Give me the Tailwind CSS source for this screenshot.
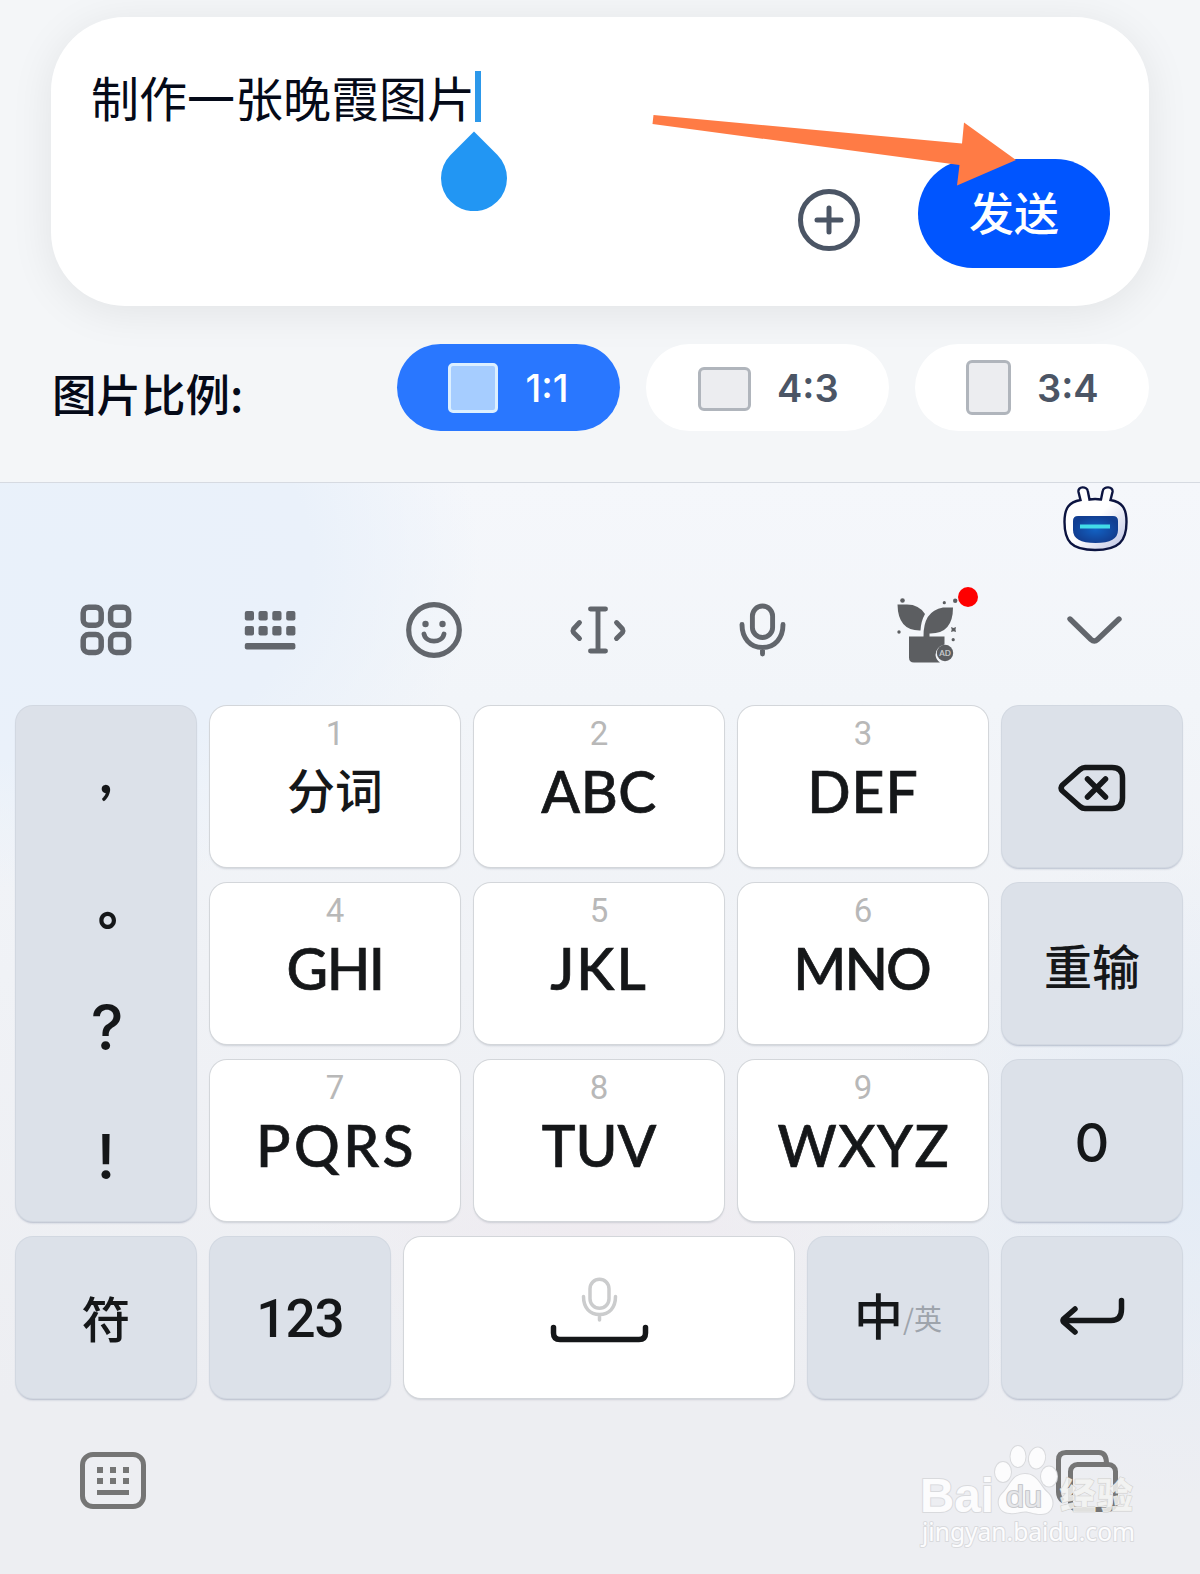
<!DOCTYPE html>
<html lang="zh-CN">
<head>
  <meta charset="utf-8"/>
  <meta content="width=device-width, initial-scale=1" name="viewport"/>
  <title>图片生成</title>
  <script src="https://cdn.jsdelivr.net/npm/@tailwindcss/browser@4"></script>
  <style>
    body { font-family: 'Lato', 'Noto Sans CJK SC', sans-serif; }
    .cjk { font-family: 'Noto Sans CJK SC', sans-serif; }
    .keyboard {
      background:
        radial-gradient(ellipse 420px 330px at 60px 80px, #e9f1fa 0%, #eaf1fa 60%, rgba(234,241,250,0) 100%),
        radial-gradient(ellipse 330px 330px at 1200px 690px, #e4ecf6 0%, rgba(228,236,246,0) 100%),
        radial-gradient(ellipse 300px 120px at 600px 750px, #efebf0 0%, rgba(239,235,240,0) 100%),
        linear-gradient(#f5f7fb 0%, #f2f5f9 20%, #f0f2f6 45%, #edeef2 84%, #edeef2 100%);
    }
    .key { border-radius: 17px; background: #fff; box-shadow: 0 0 0 1px #d3d6da, 0 2px 2px rgba(90,100,120,.22); }
    .fn { background: #dce1e9; box-shadow: 0 0 0 1px #d2d8e1, 0 2px 2px rgba(80,95,130,.36); }
    .abc { -webkit-text-stroke: .7px #151719; }
  </style>
</head>
<body class="w-[1200px] h-[1574px] overflow-hidden bg-[#f4f6f8] relative">
  <!-- prompt area -->
  <section class="h-[482px] pt-[17px] px-[51px]">
    <div class="h-[289px] rounded-[74px] bg-white shadow-[0_6px_44px_rgba(0,0,0,0.08)] pl-[40px] pr-[39px] pt-[54px] pb-[38px] flex flex-col justify-between">
      <div class="flex items-center h-[51px]">
        <span class="cjk text-[48px] leading-[51px] text-[#050a18] w-[384px] whitespace-nowrap">制作一张晚霞图片</span>
        <span class="w-[6px] h-[51px] bg-[#2c98ea]"></span>
      </div>
      <div class="flex items-center justify-end gap-[58px]">
        <svg class="w-[62px] h-[62px] mt-[13px]" viewBox="0 0 62 62" fill="none" stroke="#4b5565" stroke-width="5" stroke-linecap="round">
          <circle cx="31" cy="31" r="28.5"/>
          <path d="M31 19v24M19 31h24"/>
        </svg>
        <button class="cjk w-[192px] h-[109px] rounded-full bg-[#0055ff] text-white text-[45px] font-medium leading-none pb-[4px]">发送</button>
      </div>
    </div>

    <div class="flex items-center mt-[38px] h-[87px]">
      <span class="cjk text-[44.500px] font-medium text-[#050a18] w-[345.500px] leading-none pl-[1px] pt-[12px] whitespace-nowrap">图片比例:</span>
      <div class="flex gap-[26px] font-[Inter] font-semibold text-[38px] leading-none text-[#4b5565]">
        <div class="w-[223.500px] h-[87px] rounded-full bg-[#2977ff] text-white font-medium flex items-center pl-[51.500px]">
          <span class="w-[50px] h-[50px] mt-[1px] rounded-[5px] border-[3px] border-[#dcefff] bg-[#a6cdff]"></span>
          <span class="ml-[27.500px]">1:1</span>
        </div>
        <div class="w-[243px] h-[87px] rounded-full bg-white flex items-center pl-[52px]">
          <span class="w-[53px] h-[44px] mt-[2px] rounded-[6px] border-[3px] border-[#b0b5bc] bg-[#ecedf0]"></span>
          <span class="ml-[26px]">4:3</span>
        </div>
        <div class="w-[234px] h-[87px] rounded-full bg-white flex items-center pl-[51px]">
          <span class="w-[45px] h-[55px] rounded-[6px] border-[3px] border-[#b0b5bc] bg-[#ecedf0]"></span>
          <span class="ml-[26px]">3:4</span>
        </div>
      </div>
    </div>
  </section>

  <!-- caret handle -->
  <svg class="absolute left-[441px] top-[131px] w-[66px] h-[80px]" viewBox="0 0 66 80">
    <path d="M33 .5L56.500 24A33 33 0 1 1 9.500 24Z" fill="#2296f3"/>
  </svg>
  <!-- pointer arrow -->
  <svg class="absolute left-[650px] top-[110px] w-[370px] h-[80px]" viewBox="650 110 370 80">
    <path d="M653.500 115L962 143.500 964 122.500 1016 160 957 185.500 959.500 165 652.500 124Z" fill="#ff7b45"/>
  </svg>

  <!-- keyboard -->
  <section class="keyboard h-[1092px] border-t border-[#d6dae1] text-[#151719]">
    <div class="h-[70px] flex justify-end pr-[72px] pt-[2px]">
      <svg class="w-[66px] h-[67px]" viewBox="1062 485 66 67">
        <defs>
          <linearGradient id="head" x1="0" y1="0" x2="1" y2="1"><stop offset=".5" stop-color="#fff"/><stop offset="1" stop-color="#b9c0e2"/></linearGradient>
          <radialGradient id="face"><stop offset="0" stop-color="#1262c4"/><stop offset="1" stop-color="#123f92"/></radialGradient>
        </defs>
        <path d="M1080.500 500L1078.500 492C1077.500 486 1087 486 1087.800 491L1089.500 499.500Q1095 498.500 1101 499.500L1102.700 491C1103.500 486 1113.500 486 1112.500 492L1110.500 500C1122 502 1126.500 508 1126.500 522C1126.500 541 1119 550 1095 550C1071 550 1064.500 541 1064.500 522C1064.500 508 1069 502 1080.500 500Z" fill="url(#head)" stroke="#0c1440" stroke-width="2.400"/>
        <path d="M1078 516H1113Q1118 516 1118 521V530Q1118 543 1095.500 543Q1073 543 1073 530V521Q1073 516 1078 516Z" fill="url(#face)"/>
        <path d="M1080 526.500h30" stroke="#42dce8" stroke-width="4"/>
      </svg>
    </div>

    <div class="h-[152px] relative">
      <svg class="w-[1200px] h-[152px]" viewBox="0 553 1200 152" fill="none" stroke="#62666c" stroke-width="5.200" stroke-linecap="round" stroke-linejoin="round">
        <!-- apps -->
        <g stroke-width="5.500">
          <rect x="83.200" y="607.200" width="18" height="18" rx="5.500"/><rect x="110.600" y="607.200" width="18" height="18" rx="5.500"/>
          <rect x="83.200" y="634.500" width="18" height="18" rx="5.500"/><rect x="110.600" y="634.500" width="18" height="18" rx="5.500"/>
        </g>
        <!-- keyboard switch -->
        <g fill="#62666c" stroke="none">
          <rect x="244.800" y="611" width="9.200" height="9.500" rx="2"/><rect x="258.500" y="611" width="9.200" height="9.500" rx="2"/><rect x="272.300" y="611" width="9.200" height="9.500" rx="2"/><rect x="286.200" y="611" width="9.200" height="9.500" rx="2"/>
          <rect x="244.800" y="626" width="9.200" height="9.500" rx="2"/><rect x="258.500" y="626" width="9.200" height="9.500" rx="2"/><rect x="272.300" y="626" width="9.200" height="9.500" rx="2"/><rect x="286.200" y="626" width="9.200" height="9.500" rx="2"/>
          <rect x="244.800" y="643" width="50.600" height="6.500" rx="2"/>
        </g>
        <!-- emoji -->
        <circle cx="434" cy="630" r="25.300"/>
        <circle cx="425.500" cy="624" r="3.200" fill="#62666c" stroke="none"/><circle cx="442.500" cy="624" r="3.200" fill="#62666c" stroke="none"/>
        <path d="M424 634C426 643.500 442 643.500 444 634" stroke-width="4.800"/>
        <!-- text cursor -->
        <path d="M590.500 609h15M590.500 651h15M598 609v42M579.500 622.500L573.500 629Q572.500 630.700 573.500 632.500L579.500 638.500M616.500 622.500L622.500 629Q623.500 630.700 622.500 632.500L616.500 638.500" stroke-width="4.900"/>
        <!-- mic -->
        <g stroke-width="4.900">
          <rect x="752.400" y="606" width="20.200" height="31.500" rx="10.100"/>
          <path d="M742 624.500C742 638 750 647.500 762.500 647.500S783 638 783 624.500M762.500 647.500v6.500"/>
        </g>
        <!-- plant -->
        <g fill="#5c5e61" stroke="none">
          <path d="M897.500 604.500H907Q919 604.500 925 614Q921 621 920.500 630.500Q898 631 897.500 604.500Z"/>
          <path d="M953 607.500H943Q923 611 923.500 637H929.500V633.500Q953 634 953 607.500Z"/>
          <path d="M909 636.500H944.500V644.500Q935.500 647 935.500 655Q936 660 940 662.500H914Q909 662.500 909 657.500Z"/>
          <circle cx="945" cy="653" r="8.200"/>
          <circle cx="902.500" cy="600.500" r="2.300"/><circle cx="944.300" cy="602.700" r="1.600"/><circle cx="955.200" cy="600.700" r="2.200"/><circle cx="899" cy="632" r="1.700"/><circle cx="953.200" cy="639.700" r="1.600"/>
          <path d="M951 627l2.500 1 2.500-1-.5 2.500.5 2.500-2.500-.8-2.500.8.700-2.500Z"/>
          <text x="945" y="656" text-anchor="middle" font-size="8" font-weight="700" fill="#c5c7ca">AD</text>
        </g>
        <!-- collapse -->
        <path d="M1070 619L1091 639.500Q1094.300 642.500 1097.500 639.500L1119 619" stroke-width="5.400"/>
      </svg>
      <span class="absolute left-[958px] top-[34px] w-[20px] h-[20px] rounded-full bg-[#fe0000]"></span>
    </div>

    <div class="mt-px ml-[16px] w-[1166px] grid grid-cols-[180px_250px_250px_250px_180px] auto-rows-[161px] gap-x-[14px] gap-y-[16px] text-[57px] leading-none font-medium text-center">
      <div class="key fn row-span-3 grid grid-rows-4 items-center font-[Inter]">
        <span class="font-[Lato] font-bold text-[57px] pt-[2px]">,</span>
        <span class="cjk pl-[34px] text-[50px] pt-[5px] font-black">。</span>
        <span class="text-[62px] pl-[2px]">?</span>
        <span class="text-[62px]">!</span>
      </div>
      <div class="key pt-[11px]"><p class="font-[Roboto] text-[33px] font-normal text-[#b8b8b8] mb-[14px]">1</p><p class="cjk text-[48px]">分词</p></div>
      <div class="key pt-[11px]"><p class="font-[Roboto] text-[33px] font-normal text-[#b8b8b8] mb-[13px]">2</p><p class="abc tracking-[.5px]">ABC</p></div>
      <div class="key pt-[11px]"><p class="font-[Roboto] text-[33px] font-normal text-[#b8b8b8] mb-[13px]">3</p><p class="abc tracking-[1px]">DEF</p></div>
      <div class="key fn flex items-center justify-center">
        <svg class="w-[68px] h-[48px] mt-[3px]" viewBox="0 0 68 48" fill="none" stroke="#151719" stroke-width="5.500" stroke-linecap="round" stroke-linejoin="round">
          <path d="M27 3.500H54Q64.500 3.500 64.500 14V34Q64.500 44.500 54 44.500H27Q24.500 44.500 22 42.500L4.500 27Q1.500 24 4.500 21L22 5.500Q24.500 3.500 27 3.500Z"/>
          <path d="M29.500 15L47.500 33M47.500 15L29.500 33"/>
        </svg>
      </div>

      <div class="key pt-[11px]"><p class="font-[Roboto] text-[33px] font-normal text-[#b8b8b8] mb-[13px]">4</p><p class="abc tracking-[-1.500px]">GHI</p></div>
      <div class="key pt-[11px]"><p class="font-[Roboto] text-[33px] font-normal text-[#b8b8b8] mb-[13px]">5</p><p class="abc tracking-[2px]">JKL</p></div>
      <div class="key pt-[11px]"><p class="font-[Roboto] text-[33px] font-normal text-[#b8b8b8] mb-[13px]">6</p><p class="abc tracking-[-2px] pr-[3px]">MNO</p></div>
      <div class="key fn flex items-center justify-center"><span class="cjk text-[48px]">重输</span></div>

      <div class="key pt-[11px]"><p class="font-[Roboto] text-[33px] font-normal text-[#b8b8b8] mb-[13px]">7</p><p class="abc tracking-[3.500px] pl-[3px]">PQRS</p></div>
      <div class="key pt-[11px]"><p class="font-[Roboto] text-[33px] font-normal text-[#b8b8b8] mb-[13px]">8</p><p class="abc">TUV</p></div>
      <div class="key pt-[11px]"><p class="font-[Roboto] text-[33px] font-normal text-[#b8b8b8] mb-[13px]">9</p><p class="abc tracking-[1.500px] pl-[2px]">WXYZ</p></div>
      <div class="key fn flex items-center justify-center"><span class="font-[Inter] text-[54px] pt-[5px]">0</span></div>
    </div>

    <div class="ml-[16px] w-[1166px] mt-[16px] h-[161px] flex gap-[14px] text-[53px] leading-none font-medium">
      <div class="key fn w-[180px] flex items-center justify-center"><span class="cjk text-[49px] pb-[3px]">符</span></div>
      <div class="key fn w-[180px] flex items-center justify-center font-[Roboto] tracking-[-1px] pt-[3px]">123</div>
      <div class="key w-[390px] flex items-center justify-center">
        <svg class="w-[100px] h-[68px] mt-[-15px]" viewBox="549 1276 100 68" fill="none" stroke-linecap="round" stroke-linejoin="round">
          <g stroke="#cbcccd" stroke-width="3.500">
            <rect x="590" y="1279.300" width="19" height="29" rx="9.500"/>
            <path d="M583.500 1296.500C583.500 1308 590 1314.500 599.500 1314.500S615.500 1308 615.500 1296.500M599.500 1314.500v5.500"/>
          </g>
          <path d="M553.500 1327.500V1333Q553.500 1339.500 560 1339.500H639Q645.500 1339.500 645.500 1333V1327.500" stroke="#151719" stroke-width="5.500"/>
        </svg>
      </div>
      <div class="key fn w-[180px] flex items-center justify-center">
        <span class="cjk text-[49px] pb-[8px]">中</span><span class="cjk text-[28px] font-normal text-[#9ea4ac] pt-[1px]">/英</span>
      </div>
      <div class="key fn w-[180px] flex items-center justify-center">
        <svg class="w-[66px] h-[38px] mt-[-3px]" viewBox="0 0 66 38" fill="none" stroke="#151719" stroke-width="5.500" stroke-linecap="round" stroke-linejoin="round">
          <path d="M62.500 3.500V12Q62.500 23.500 52 23.500H4M16 12L4.500 22Q3.500 23.500 4.500 25L16 35"/>
        </svg>
      </div>
    </div>

    <div class="flex justify-between pl-[80px] pr-[81px] pt-[51px]">
      <svg class="w-[66px] h-[64px]" viewBox="80 1449 66 64" fill="#757575">
        <rect x="82.500" y="1454.500" width="61" height="52" rx="10.500" fill="none" stroke="#757575" stroke-width="5"/>
        <path d="M97 1467h6v6h-6zM110 1467h6v6h-6zM123 1467h6v6h-6zM97 1478h6v6h-6zM110 1478h6v6h-6zM123 1478h6v6h-6zM97 1490h32v5h-32z"/>
      </svg>
      <svg class="w-[64px] h-[64px]" viewBox="1055 1449 64 64" fill="none" stroke="#757575" stroke-width="5">
        <path d="M1063 1501Q1058.500 1498 1058.500 1492V1460Q1058.500 1452.500 1066 1452.500H1099Q1106.500 1452.500 1106.500 1464"/>
        <rect x="1070.500" y="1464.500" width="45" height="45" rx="7"/>
      </svg>
    </div>
  </section>

  <!-- watermark -->
  <svg class="absolute left-[910px] top-[1436px] w-[240px] h-[125px]" viewBox="910 1436 240 125" fill="#fcfcfd" stroke="#d9dadd" stroke-width="2" paint-order="stroke" stroke-linejoin="round">
    <ellipse cx="1003" cy="1472" rx="8" ry="10"/>
    <ellipse cx="1018" cy="1456.500" rx="7.500" ry="10.500"/>
    <ellipse cx="1037" cy="1458" rx="8" ry="10.500" transform="rotate(12 1037 1458)"/>
    <ellipse cx="1049" cy="1476.500" rx="8" ry="10"/>
    <path d="M1025 1474C1038 1474 1040 1487 1048 1493C1056 1501 1053 1514 1041 1514C1033 1514 1030 1511.500 1025 1511.500S1016 1514 1010 1513C998 1513 996 1500 1002 1494C1010 1487 1012 1474 1025 1474Z"/>
    <text x="920" y="1511.500" font-family="Liberation Sans" font-weight="700" font-size="48" textLength="74" lengthAdjust="spacingAndGlyphs">Bai</text>
    <text x="1006" y="1507" font-family="Liberation Sans" font-size="29" textLength="36" lengthAdjust="spacingAndGlyphs" fill="#e6e7ea" stroke="#c6c8cc">du</text>
    <text x="1060" y="1509" font-family="Noto Sans CJK SC" font-weight="900" font-size="36" textLength="73" fill="#f4f4f2" fill-opacity=".85" stroke="#cfcfcd" stroke-width="1">经验</text>
    <text x="922" y="1541" font-family="Noto Sans" font-size="26" textLength="213" lengthAdjust="spacingAndGlyphs">jingyan.baidu.com</text>
  </svg>
</body>
</html>
